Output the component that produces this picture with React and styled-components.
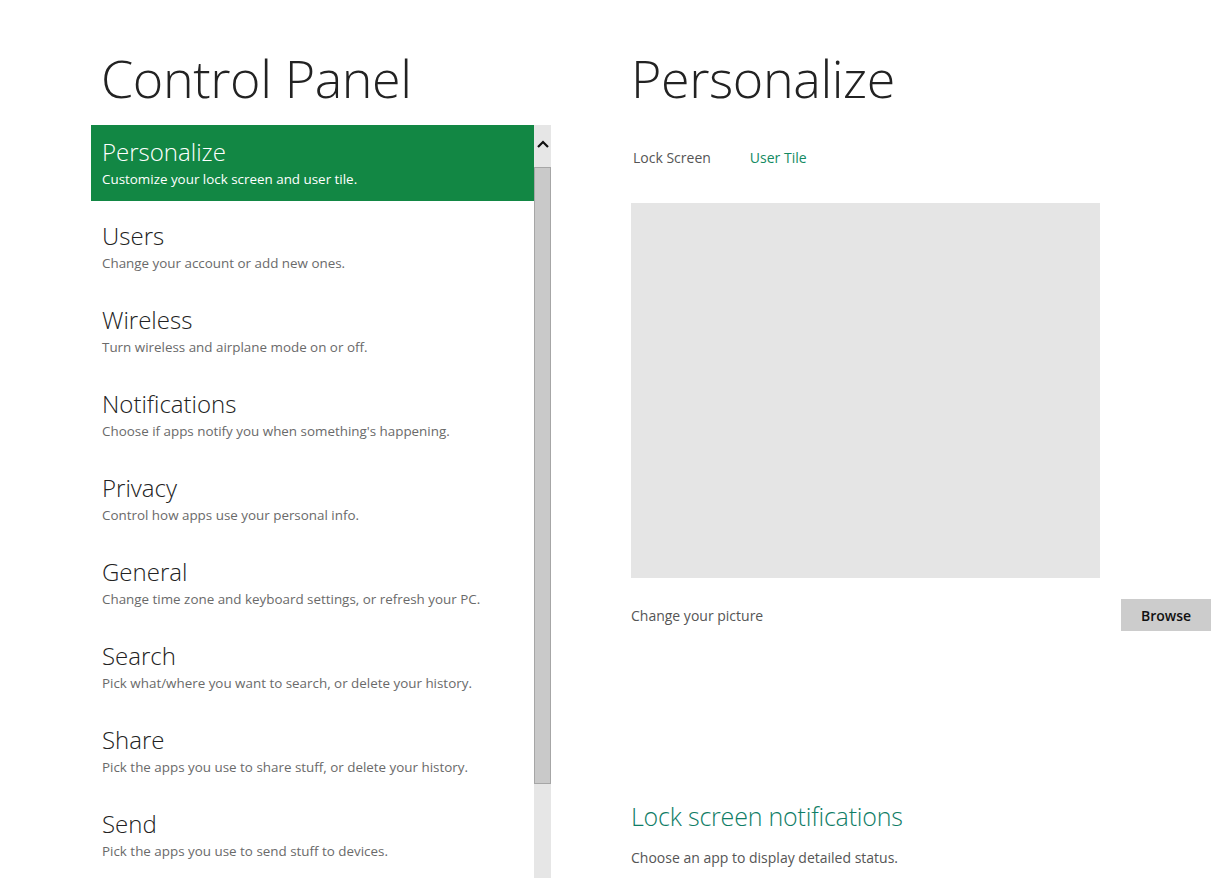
import React from 'react'
import styled, { createGlobalStyle } from 'styled-components';

const GlobalStyle = createGlobalStyle`
  html, body {
    margin: 0;
    padding: 0;
    height: 100%;
    overflow: hidden;
    background: #ffffff;
  }
  body {
    font-family: "Open Sans", "Noto Sans", sans-serif;
    color: #333;
  }
`;

const items = [
  { title: 'Personalize', desc: 'Customize your lock screen and user tile.' },
  { title: 'Users', desc: 'Change your account or add new ones.' },
  { title: 'Wireless', desc: 'Turn wireless and airplane mode on or off.' },
  { title: 'Notifications', desc: "Choose if apps notify you when something's happening." },
  { title: 'Privacy', desc: 'Control how apps use your personal info.' },
  { title: 'General', desc: 'Change time zone and keyboard settings, or refresh your PC.' },
  { title: 'Search', desc: 'Pick what/where you want to search, or delete your history.' },
  { title: 'Share', desc: 'Pick the apps you use to share stuff, or delete your history.' },
  { title: 'Send', desc: 'Pick the apps you use to send stuff to devices.' },
]

const App = () => {
  return (
    <Page>
      <GlobalStyle />
      <LeftColumn>
        <PageTitle>Control Panel</PageTitle>
        <ListArea>
          <List>
            {items.map((item, i) => (
              <Item key={item.title} active={i === 0}>
                <ItemTitle>{item.title}</ItemTitle>
                <ItemDesc active={i === 0}>{item.desc}</ItemDesc>
              </Item>
            ))}
          </List>
          <Scrollbar>
            <ArrowButton>
              <svg width="12" height="8" viewBox="0 0 12 8">
                <path d="M1 7 L6 2 L11 7" fill="none" stroke="#111" strokeWidth="2.2" />
              </svg>
            </ArrowButton>
            <Thumb />
          </Scrollbar>
        </ListArea>
      </LeftColumn>
      <RightColumn>
        <PageTitle>Personalize</PageTitle>
        <Tabs>
          <Tab>Lock Screen</Tab>
          <Tab selected>User Tile</Tab>
        </Tabs>
        <Picture />
        <PictureRow>
          <Label>Change your picture</Label>
          <Button>Browse</Button>
        </PictureRow>
        <SectionTitle>Lock screen notifications</SectionTitle>
        <Label>Choose an app to display detailed status.</Label>
      </RightColumn>
    </Page>
  )
}

export default App

const Page = styled.div`
  display: flex;
  height: 878px;
  padding-left: 91px;
  gap: 80px;
  overflow: hidden;
`;

const LeftColumn = styled.div`
  display: flex;
  flex-direction: column;
  width: 460px;
`;

const PageTitle = styled.h1`
  margin: 0;
  height: 125px;
  box-sizing: border-box;
  padding-top: 38px;
  padding-left: 10px;
  font-weight: 300;
  font-size: 52px;
  line-height: 80px;
  color: #222;
  letter-spacing: -0.4px;
  white-space: nowrap;
`;

const ListArea = styled.div`
  display: flex;
  flex: 1;
  min-height: 0;
`;

const List = styled.div`
  width: 443px;
  display: flex;
  flex-direction: column;
  gap: 8px;
  overflow: hidden;
`;

const Item = styled.div`
  flex-shrink: 0;
  height: 76px;
  box-sizing: border-box;
  padding: 10px 11px 0;
  background: ${(props) => props.active ? '#128744' : 'transparent'};
  color: ${(props) => props.active ? '#ffffff' : '#222'};
`;

const ItemTitle = styled.div`
  font-size: 24px;
  font-weight: 300;
  line-height: 33px;
`;

const ItemDesc = styled.div`
  margin-top: 1px;
  font-size: 13.4px;
  line-height: 20px;
  color: ${(props) => props.active ? '#ffffff' : '#6a6a6a'};
  font-weight: 400;
  white-space: nowrap;
`;

const Scrollbar = styled.div`
  width: 17px;
  background: #e6e6e6;
  display: flex;
  flex-direction: column;
`;

const ArrowButton = styled.div`
  height: 42px;
  display: flex;
  align-items: center;
  justify-content: center;
  padding-bottom: 4px;
  box-sizing: border-box;
`;

const Thumb = styled.div`
  height: 617px;
  background: #c9c9c9;
  border: 1px solid #a6a6a6;
  box-sizing: border-box;
`;

const RightColumn = styled.div`
  display: flex;
  flex-direction: column;
  width: 580px;
  & > h1 {
    padding-left: 0;
  }
`;

const Tabs = styled.div`
  display: flex;
  gap: 39px;
  padding-left: 2px;
  padding-top: 23px;
  height: 78px;
  box-sizing: border-box;
`;

const Tab = styled.div`
  font-size: 14px;
  line-height: 20px;
  color: ${(props) => props.selected ? '#138a62' : '#555'};
`;

const Picture = styled.div`
  width: 469px;
  height: 375px;
  background: #e5e5e5;
`;

const PictureRow = styled.div`
  display: flex;
  justify-content: space-between;
  align-items: center;
  margin-top: 21px;
  height: 32px;
`;

const Label = styled.div`
  font-size: 14px;
  line-height: 20px;
  color: #555;
  padding-top: 1px;
`;

const Button = styled.div`
  width: 90px;
  height: 32px;
  background: #cccccc;
  color: #111;
  font-size: 14px;
  font-weight: 600;
  display: flex;
  align-items: center;
  justify-content: center;
`;

const SectionTitle = styled.h2`
  margin: 167px 0 13px;
  font-size: 25px;
  font-weight: 300;
  line-height: 36px;
  color: #0f7d66;
  letter-spacing: -0.2px;
`;
